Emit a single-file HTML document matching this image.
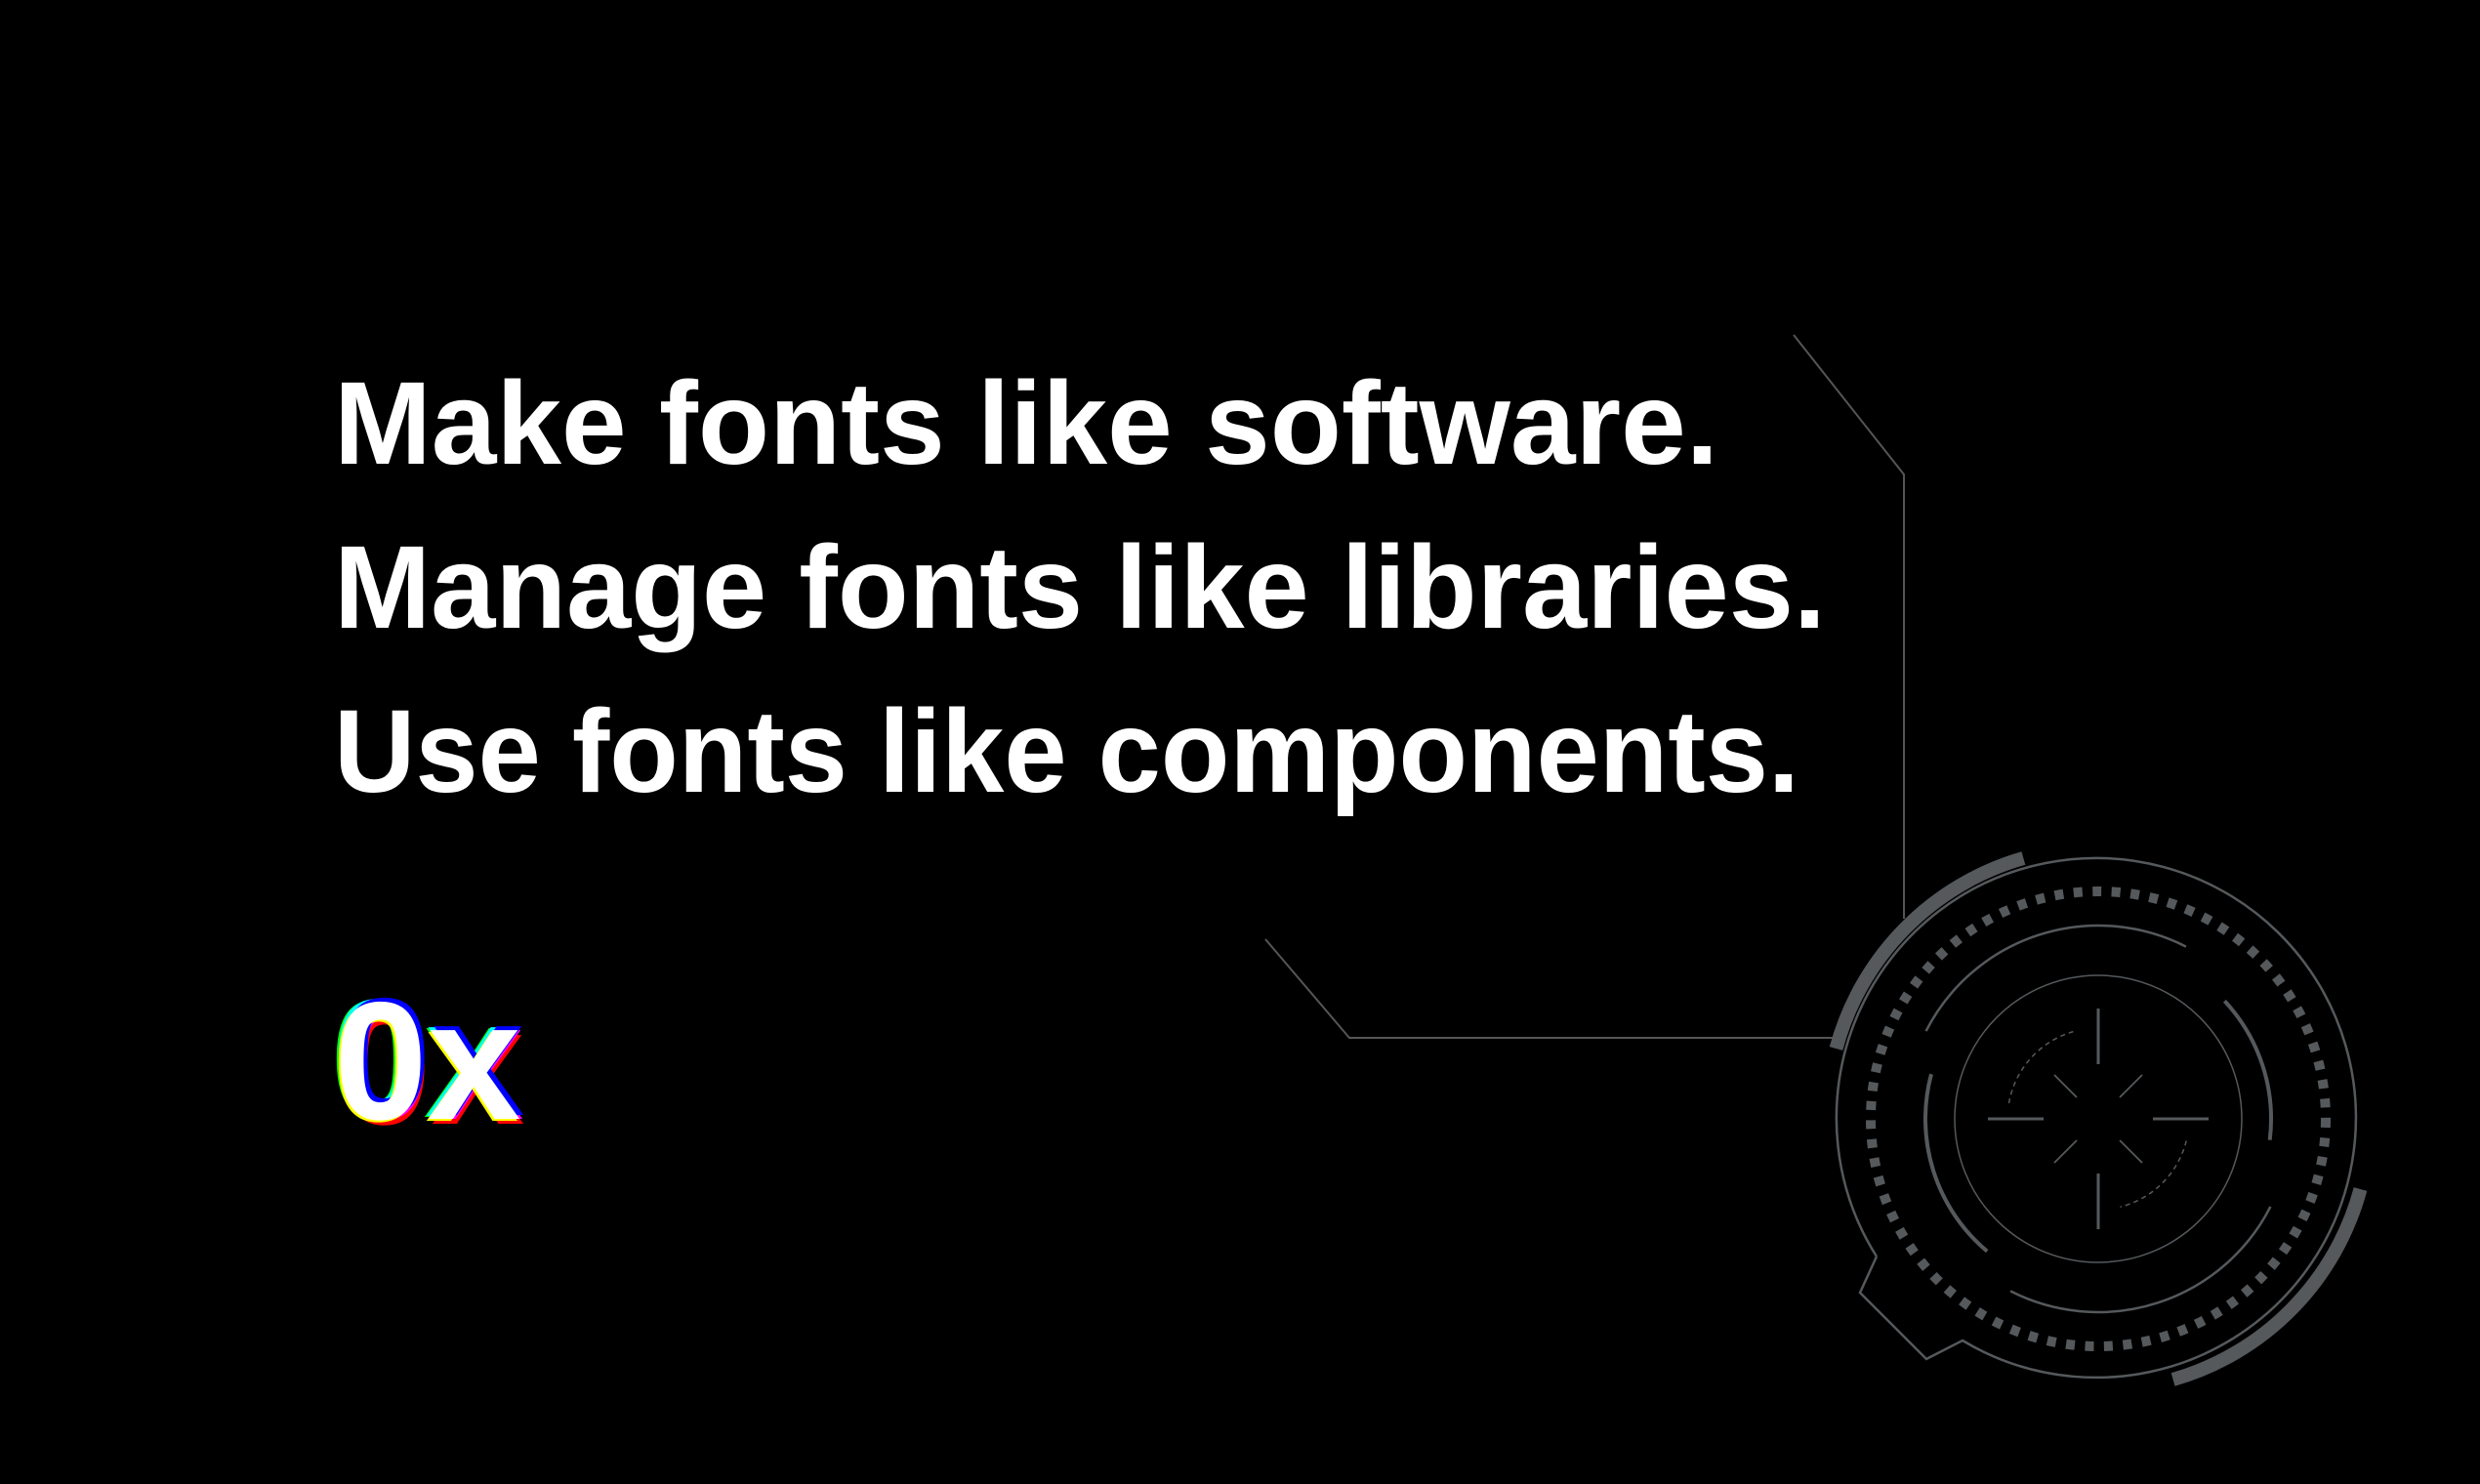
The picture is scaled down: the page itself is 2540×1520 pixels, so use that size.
<!DOCTYPE html>
<html><head><meta charset="utf-8"><style>
html,body{margin:0;padding:0;background:#000;}
body{width:2540px;height:1520px;overflow:hidden;}
svg{display:block}
</style></head><body>
<svg width="2540" height="1520" viewBox="0 0 2540 1520" xmlns="http://www.w3.org/2000/svg">
<g font-family="'Liberation Sans', sans-serif" font-weight="bold" fill="#fff" font-size="121">
<text x="342" y="475" textLength="1418" lengthAdjust="spacingAndGlyphs">Make fonts like software.</text>
<text x="342" y="643" textLength="1528" lengthAdjust="spacingAndGlyphs">Manage fonts like libraries.</text>
<text x="342" y="811" textLength="1501" lengthAdjust="spacingAndGlyphs">Use fonts like components.</text>
</g>
<g font-family="'Liberation Sans', sans-serif" font-weight="bold" font-size="172">
<text x="338" y="1144" fill="#00ff00">0x</text>
<text x="340" y="1143" fill="#00ffff">0x</text>
<text x="346" y="1151" fill="#ff0000">0x</text>
<text x="345" y="1146" fill="#ff00ff">0x</text>
<text x="346" y="1142" fill="#0000ff">0x</text>
<text x="340" y="1148" fill="#ffff00">0x</text>
<text x="342" y="1146" fill="#fff">0x</text>
</g>
<g fill="none" stroke="#555" stroke-width="2">
<polyline points="1837,343 1950,486 1950,941"/>
<polyline points="1296,962 1382,1063 1878,1063"/>
</g>
<g transform="translate(2149,1146)" fill="none" stroke="#55595c">
<path stroke-width="2.5" d="M -227 141 L -244 178 L -176 246 L -139 227 A 266 266 0 1 0 -227 141"/>
<path stroke-width="14" d="M -268.5 -72 A 278 278 0 0 1 -76.6 -267"/>
<path stroke-width="14" d="M 268.5 72 A 278 278 0 0 1 76.6 267"/>
<circle r="233" stroke-width="10" stroke-dasharray="9 10.5"/>
<path stroke-width="2.5" d="M -176.4 -89.9 A 198 198 0 0 1 89.9 -176.4"/>
<path stroke-width="2.5" d="M 176.4 89.9 A 198 198 0 0 1 -89.9 176.4"/>
<path stroke-width="4" d="M -171 -45.8 A 177 177 0 0 0 -113.8 135.6"/>
<path stroke-width="4" d="M 129.4 -120.7 A 177 177 0 0 1 175.7 21.6"/>
<circle r="147" stroke-width="1.5"/>
<g stroke-width="3">
<line x1="0" y1="-113" x2="0" y2="-56"/>
<line x1="0" y1="56" x2="0" y2="113"/>
<line x1="-113" y1="0" x2="-56" y2="0"/>
<line x1="56" y1="0" x2="113" y2="0"/>
</g>
<g stroke-width="1.8">
<line x1="-22" y1="-22" x2="-45" y2="-45"/>
<line x1="22" y1="-22" x2="45" y2="-45"/>
<line x1="-22" y1="22" x2="-45" y2="45"/>
<line x1="22" y1="22" x2="45" y2="45"/>
</g>
<path stroke-width="1.5" stroke-dasharray="5 4" d="M -91.5 -16 A 93 93 0 0 1 -25.6 -89.4"/>
<path stroke-width="1.5" stroke-dasharray="5 4" d="M 90.2 22.5 A 93 93 0 0 1 22.5 90.2"/>
</g>
</svg>
</body></html>
